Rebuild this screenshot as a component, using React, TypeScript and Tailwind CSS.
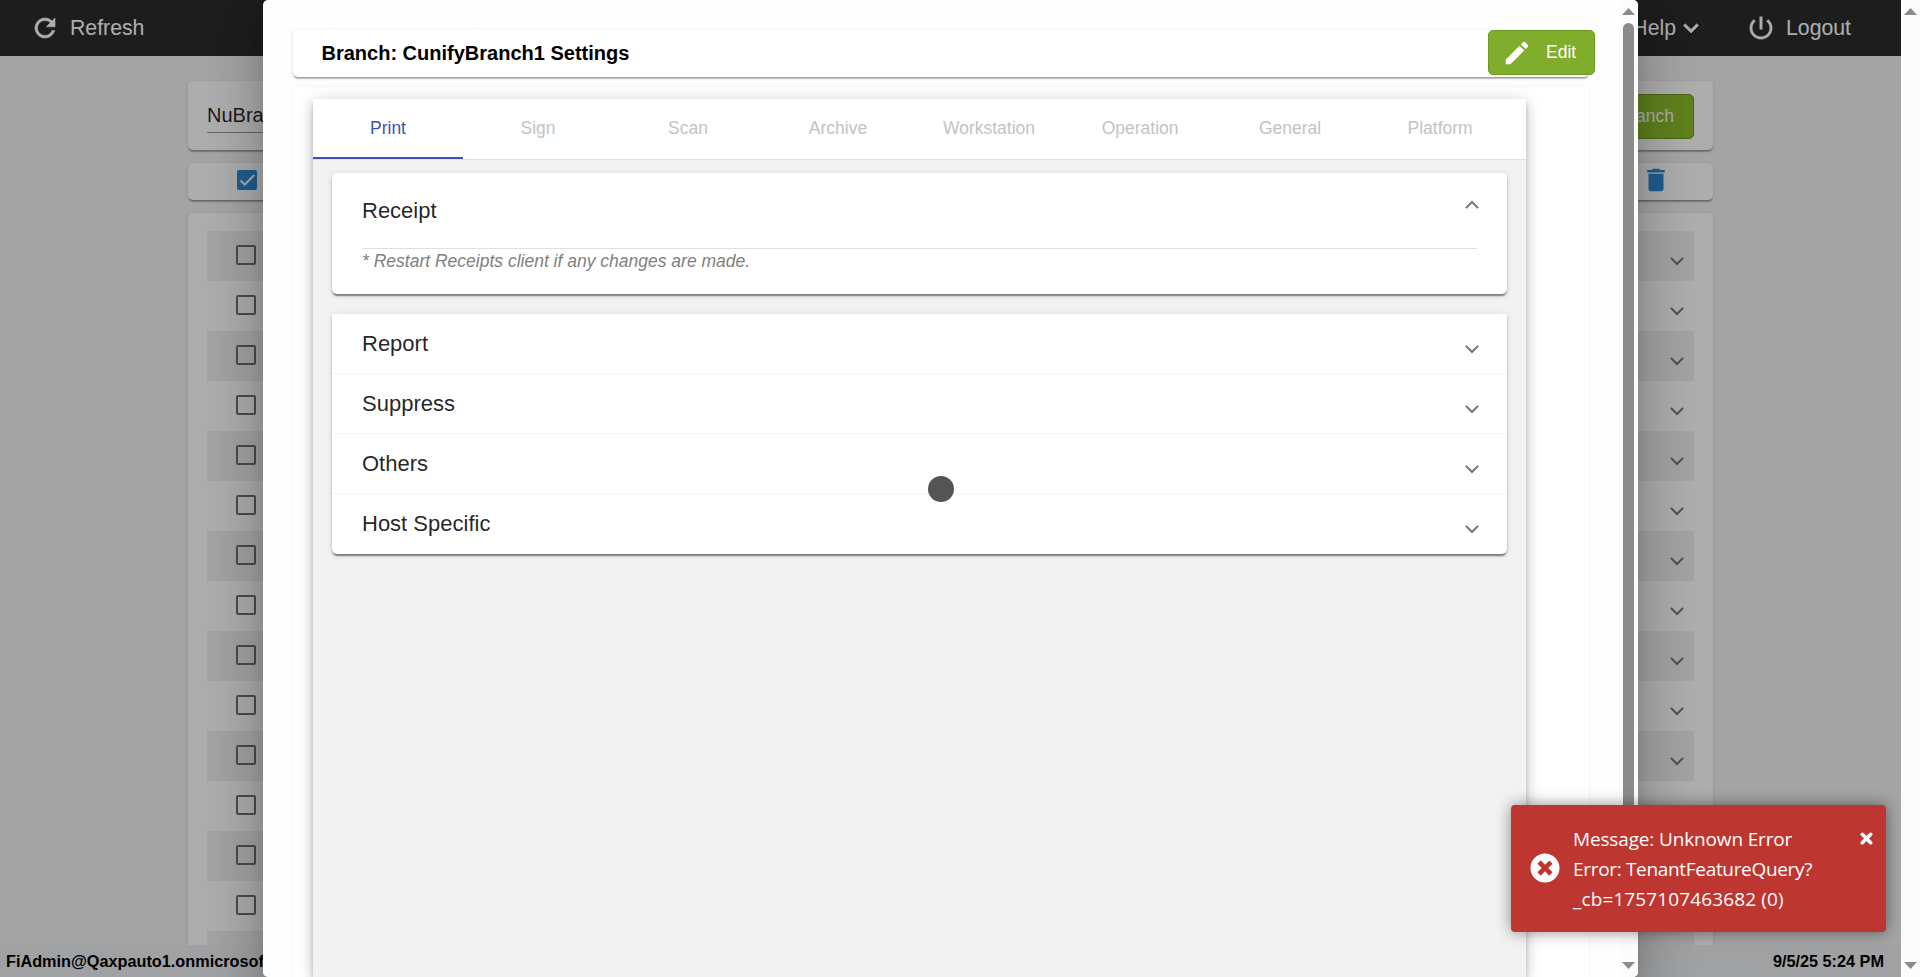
import type { ReactNode } from "react";

const tabs = ["Sign", "Scan", "Archive", "Workstation", "Operation", "General", "Platform"];
const sections = ["Report", "Suppress", "Others", "Host Specific"];
const rows = Array.from({ length: 15 }, (_, i) => i);

function Icon({ d, className }: { d: string; className: string }) {
  return (
    <svg viewBox="0 0 24 24" fill="currentColor" className={className}>
      <path d={d} />
    </svg>
  );
}

const icons = {
  refresh:
    "M17.65 6.35C16.2 4.9 14.21 4 12 4c-4.42 0-7.99 3.58-7.99 8s3.57 8 7.99 8c3.73 0 6.84-2.55 7.73-6h-2.08c-.82 2.33-3.04 4-5.65 4-3.31 0-6-2.69-6-6s2.69-6 6-6c1.66 0 3.14.69 4.22 1.78L13 11h7V4l-2.35 2.35z",
  power:
    "M13 3h-2v10h2V3zm4.83 2.17l-1.42 1.42C17.99 7.86 19 9.81 19 12c0 3.87-3.13 7-7 7s-7-3.13-7-7c0-2.19 1.01-4.14 2.58-5.42L6.17 5.17C4.23 6.82 3 9.26 3 12c0 4.97 4.03 9 9 9s9-4.03 9-9c0-2.74-1.23-5.18-3.17-6.83z",
  expand: "M16.59 8.59L12 13.17 7.41 8.59 6 10l6 6 6-6z",
  edit: "M3 17.25V21h3.75L17.81 9.94l-3.75-3.75L3 17.25zM20.71 7.04c.39-.39.39-1.02 0-1.41l-2.34-2.34c-.39-.39-1.02-.39-1.41 0l-1.83 1.83 3.75 3.75 1.83-1.83z",
  trash: "M6 19c0 1.1.9 2 2 2h8c1.1 0 2-.9 2-2V7H6v12zM19 4h-3.5l-1-1h-5l-1 1H5v2h14V4z",
};

function Chevron({ up = false }: { up?: boolean }) {
  return (
    <svg viewBox="0 0 14 9" className={up ? "h-[9px] w-[14px] rotate-180" : "h-[9px] w-[14px]"}>
      <path d="M0.9 0.9L7 7L13.1 0.9" fill="none" stroke="#757575" strokeWidth="2" />
    </svg>
  );
}

function Scrollbar({ children, className }: { children?: ReactNode; className: string }) {
  return (
    <div className={`flex shrink-0 flex-col items-center justify-between bg-[#fcfcfc] py-2 ${className}`}>
      <svg viewBox="0 0 13 7" className="h-[7px] w-[13px] shrink-0">
        <path d="M6.5 0L13 7H0z" fill="#8b8b8b" />
      </svg>
      {children}
      <svg viewBox="0 0 13 7" className="h-[7px] w-[13px] shrink-0">
        <path d="M6.5 7L13 0H0z" fill="#8b8b8b" />
      </svg>
    </div>
  );
}

const card =
  "bg-white shadow-[0_3px_1px_-1px_rgba(0,0,0,0.2),0_1px_1px_rgba(0,0,0,0.14),0_1px_4px_rgba(0,0,0,0.12)]";
const panel =
  "bg-white shadow-[0_4px_1px_-2px_rgba(0,0,0,0.2),0_2px_2px_rgba(0,0,0,0.3),0_1px_6px_rgba(0,0,0,0.12)]";

function BranchList() {
  return (
    <div className="flex h-full w-[1901px] flex-col bg-[#f2f2f2]">
      <header className="flex h-14 shrink-0 items-center bg-[#2c2c2c] text-[21.25px] text-white">
        <Icon d={icons.refresh} className="ml-[30px] h-[30px] w-[30px] stroke-current stroke-[0.5]" />
        <span className="mt-[2px] ml-[10px]">Refresh</span>
        <span className="mt-[2px] ml-auto">Help</span>
        <Icon d={icons.expand} className="h-[30px] w-[30px] stroke-current stroke-[0.5]" />
        <Icon d={icons.power} className="ml-10 h-[30px] w-[30px] stroke-current stroke-[0.3]" />
        <span className="mt-[2px] mr-[50px] ml-[10px]">Logout</span>
      </header>

      <main className="flex min-h-0 flex-1 flex-col items-center pt-[25px]">
        <section className={`flex h-[69px] w-[1525px] shrink-0 items-center justify-between rounded-[5px] px-[19px] ${card}`}>
          <div className="mt-[7px] h-[27px] w-[260px] border-b border-[#949494] text-[20px] leading-[19px] text-black/87">
            NuBranch
          </div>
          <button className="mt-[2px] h-[45px] rounded-[5px] border border-[#6d9a23] bg-[#8bbf2c] px-[19px] text-[17.5px] text-white">
            Add Branch
          </button>
        </section>

        <section className={`mt-[13px] flex h-[37px] w-[1525px] shrink-0 items-center justify-between rounded-[5px] pr-[42px] pl-[49px] ${card}`}>
          <svg viewBox="0 0 20 20" className="mb-[3px] h-5 w-5">
            <rect width="20" height="20" rx="2" fill="#2f89d3" />
            <path d="M3.5 10.5L7.7 14.7L17.3 5" fill="none" stroke="#fff" strokeWidth="2" />
          </svg>
          <Icon d={icons.trash} className="mb-[3px] h-[30px] w-[30px] text-[#2f89d3]" />
        </section>

        <section className={`mt-[13px] flex min-h-0 w-[1525px] flex-1 flex-col overflow-hidden rounded-t-[5px] px-[19px] pt-[18px] ${card}`}>
          {rows.map((i) => (
            <div
              key={i}
              className={`flex h-[50px] shrink-0 items-center justify-between pr-[10px] pl-[29px] ${i % 2 === 0 ? "bg-[#f0f0f0]" : ""}`}
            >
              <span className="mb-[2px] h-5 w-5 rounded-[2px] border-2 border-[#6f6f6f]" />
              {i < 11 && (
                <span className="mt-[11px]">
                  <Chevron />
                </span>
              )}
            </div>
          ))}
        </section>
      </main>

      <footer className="relative flex h-8 shrink-0 items-center justify-between bg-[#ebeef1] pr-[17px] pl-[6px] text-[16.25px] font-bold">
        <span>FiAdmin@Qaxpauto1.onmicrosoft.com</span>
        <span>9/5/25 5:24 PM</span>
      </footer>
    </div>
  );
}

function SettingsDialog() {
  return (
    <div className="absolute top-0 left-[263px] flex h-[977px] w-[1375px] overflow-hidden rounded-[5px] bg-[#fefefe]">
      <div className="flex flex-1 flex-col pt-[30px] pl-[30px]">
        <div className={`flex h-[47px] w-[1296px] shrink-0 items-start rounded-[5px] ${card}`}>
          <h1 className="ml-[28.5px] text-[20px] leading-[46px] font-bold text-black">Branch: CunifyBranch1 Settings</h1>
          <button className="-mr-[6px] ml-auto flex h-[45px] w-[107px] items-center rounded-[5px] border border-[#6d9a23] bg-[#80ad2b] pl-[13px] text-[17.5px] text-white">
            <Icon d={icons.edit} className="h-[30px] w-[30px]" />
            <span className="ml-[14px]">Edit</span>
          </button>
        </div>

        <div className="mt-[10px] flex w-[1296px] flex-1 flex-col rounded-t-[5px] bg-white pt-[12px] pl-[20px] shadow-[0_0_3px_rgba(0,0,0,0.08)]">
          <div className="flex w-[1213px] flex-1 flex-col bg-[#f2f2f2] shadow-[0_3px_6px_-1px_rgba(0,0,0,0.2),0_6px_12px_rgba(0,0,0,0.14),0_1px_18px_rgba(0,0,0,0.12)]">
            <nav className="flex h-[61px] shrink-0 border-b border-[#dfdfdf] bg-white text-[17.5px] leading-[58px]">
              <span className="w-[150px] border-b-2 border-[#3f51b5] text-center text-[#3f51b5]">Print</span>
              {tabs.map((tab) => (
                <span key={tab} className="min-w-[150px] px-[30px] text-center text-[#c3c3c3]">
                  {tab}
                </span>
              ))}
            </nav>

            <section className={`mx-[19px] mt-[13px] flex h-[121px] shrink-0 flex-col rounded-[5px] px-[30px] ${panel}`}>
              <div className="flex h-[75px] items-start justify-between">
                <h2 className="text-[22px] leading-[75px] text-black/87">Receipt</h2>
                <span className="-mr-[2px] pt-[27px] leading-none">
                  <Chevron up />
                </span>
              </div>
              <p className="border-t border-[#dfdfdf] text-[17.5px] leading-[25px] text-[#808080] italic">
                * Restart Receipts client if any changes are made.
              </p>
            </section>

            <section className={`mx-[19px] mt-5 flex shrink-0 flex-col rounded-b-[5px] ${panel}`}>
              {sections.map((name, i) => (
                <div
                  key={name}
                  className={`flex h-[60px] items-center justify-between pr-[28px] pl-[30px] ${i < 3 ? "border-b border-[#f5f5f5]" : ""}`}
                >
                  <h2 className="text-[22px] leading-[58px] text-black/87">{name}</h2>
                  <span className="mt-[11px]">
                    <Chevron />
                  </span>
                </div>
              ))}
            </section>
          </div>
        </div>
      </div>

      <Scrollbar className="h-full w-[19px]">
        <div className="mt-2 mb-auto h-[850px] w-[11px] rounded-full bg-[#8b8b8b]" />
      </Scrollbar>
    </div>
  );
}

function Toast() {
  return (
    <div className="absolute top-[805px] left-[1511px] flex h-[127px] w-[375px] items-center rounded-[4px] bg-[#bd362f] pl-[19px] font-['Open_Sans','Noto_Sans',sans-serif] text-[19px] leading-[30px] text-white shadow-[0_0_15px_rgba(0,0,0,0.45)]">
      <svg viewBox="0 0 512 512" fill="#fff" className="mb-[2px] h-[30px] w-[30px] shrink-0">
        <path d="M256 8C119 8 8 119 8 256s111 248 248 248 248-111 248-248S393 8 256 8zm121.600 313.100c4.700 4.700 4.700 12.300 0 17L338 377.600c-4.700 4.700-12.300 4.700-17 0L256 312l-65.100 65.600c-4.700 4.700-12.300 4.700-17 0L134.400 338c-4.700-4.700-4.700-12.300 0-17l65.600-65-65.600-65.100c-4.700-4.700-4.700-12.300 0-17l39.600-39.600c4.700-4.700 12.300-4.700 17 0l65 65.700 65.100-65.600c4.700-4.700 12.300-4.700 17 0l39.600 39.600c4.700 4.700 4.700 12.300 0 17L312 256l65.600 65.100z" />
      </svg>
      <p className="ml-[13px] flex flex-col whitespace-nowrap">
        <span className="tracking-[-0.15px]">Message: Unknown Error</span>
        <span className="tracking-[-0.32px]">Error: TenantFeatureQuery?</span>
        <span className="tracking-[0.12px]">_cb=1757107463682 (0)</span>
      </p>
      <svg viewBox="0 0 13 13" className="mr-[13.5px] mb-[61px] ml-auto h-[13px] w-[13px]">
        <path d="M2.3 2.3L10.7 10.7M10.7 2.3L2.3 10.7" stroke="#fff" strokeWidth="3.6" strokeLinecap="round" />
      </svg>
    </div>
  );
}

export default function App() {
  return (
    <div className="relative flex h-[977px] w-full overflow-hidden font-['Liberation_Sans',Arial,sans-serif]">
      <BranchList />
      <Scrollbar className="h-full w-[19px]" />

      {/* backdrop and the dialog's own shadow */}
      <div className="absolute top-0 left-0 h-full w-[1901px] overflow-hidden bg-black/32">
        <div className="absolute top-0 left-[263px] h-full w-[1375px] rounded-[5px] shadow-[0_14px_19px_-9px_rgba(0,0,0,0.2),0_30px_48px_4px_rgba(0,0,0,0.14),0_11px_58px_10px_rgba(0,0,0,0.12)]" />
      </div>

      <SettingsDialog />
      <div className="absolute top-[476px] left-[928px] h-[26px] w-[26px] rounded-full bg-[#545454]" />
      <Toast />
    </div>
  );
}
